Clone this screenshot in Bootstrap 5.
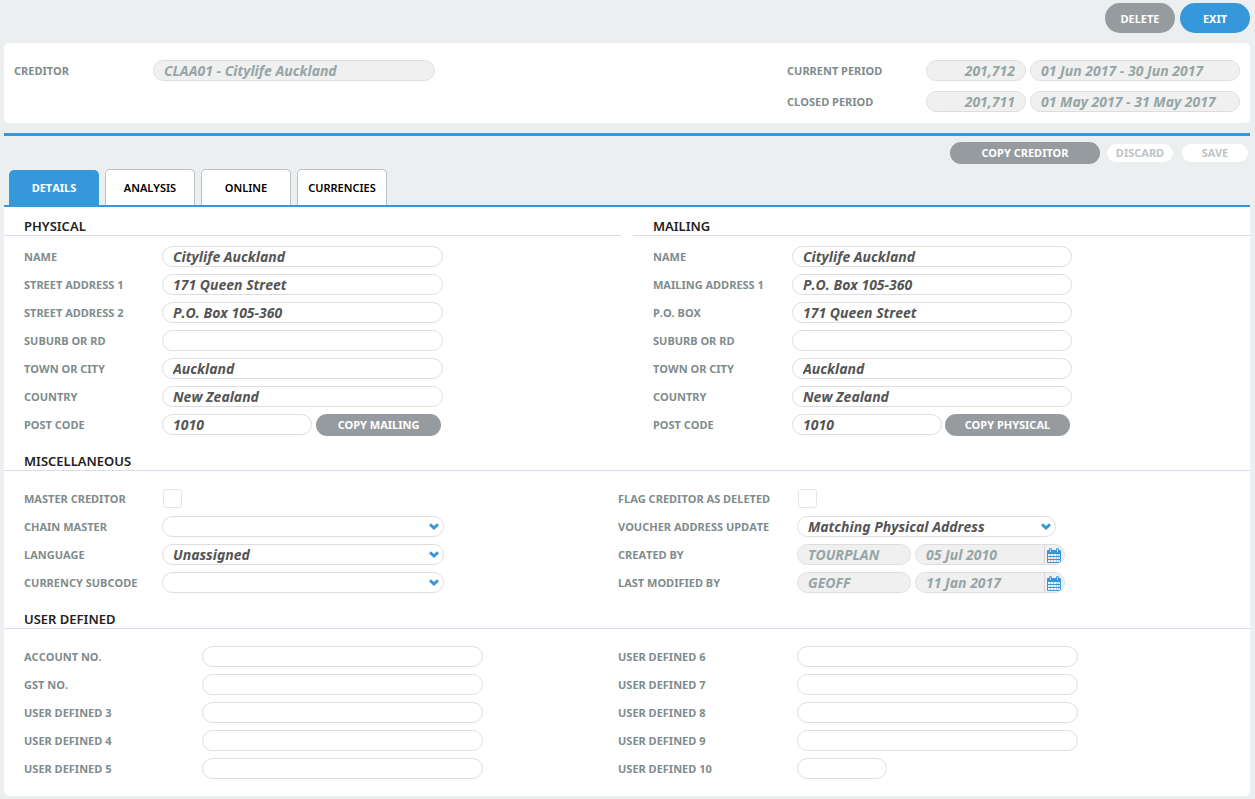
<!DOCTYPE html>
<html lang="en">
<head>
<meta charset="utf-8">
<meta name="viewport" content="width=device-width, initial-scale=1">
<title>Creditor details</title>
<link href="https://cdn.jsdelivr.net/npm/bootstrap@5.3.0/dist/css/bootstrap.min.css" rel="stylesheet">
<style>
  :root { --blue: #3498db; --grey: #969b9f; --label: #7f8c8d; --edge: #dddddd; }
  body { background: #ebeff0; font-family: "Noto Sans", "Open Sans", sans-serif; font-size: 11px; line-height: 16px; font-kerning: none; padding: 3px 5px 3px 4px; }

  /* buttons */
  .btn-pill { border: 0; border-radius: 16px; padding: 0; font-size: 11px; line-height: 16px; font-weight: 700; color: #fff; background: var(--grey); height: 22px; }
  .btn-pill.tall { width: 70px; height: 30px; padding-top: 2px; }
  .btn-pill.accent { background: var(--blue); }
  .btn-pill.wide { width: 150px; }
  .btn-pill.copy { width: 125px; }
  .btn-pill.pale, .btn-pill.pale:disabled { width: 66px; height: 18px; background: #fff; color: #bdc3c7; opacity: 1; }

  /* panels */
  .top-bar { gap: 5px; }
  .head-panel { background: #fff; border-radius: 5px; padding: 17px 10px 11px; margin-top: 10px; }
  .divider { height: 3px; background: var(--blue); margin-top: 10px; }
  .actions { gap: 7px; padding: 6px 2px 5px 0; }
  .edit-actions { gap: 9px; }
  .main-panel { background: #fff; border-radius: 0 0 5px 5px; padding-bottom: 17px; }

  /* tabs */
  .tabs { gap: 6px; padding-left: 5px; border-bottom: 2px solid var(--blue); }
  .tabs .nav-link { width: 90px; height: 36px; padding: 0; font-weight: 600; color: #000; background: #fff; border: 1px solid #bdc3c7; border-bottom: 0; border-radius: 5px 5px 0 0; }
  .tabs .nav-link.active { height: 35px; margin-top: 1px; padding-top: 1px; border: 0; color: #fff; background: var(--blue); font-weight: 700; }

  /* sections */
  .section-title { height: 29px; margin: 0; padding: 11px 20px 0; font-size: 13px; line-height: 17px; font-weight: 600; color: #222; border-bottom: 1px solid #dadae8; }
  .addresses { gap: 12px; }
  .address-fields { padding: 10px 0 7px 20px; }
  .two-col { display: grid; grid-template-columns: 1fr 1fr; padding: 17px 38px 0 20px; }
  .two-col.spaced { padding-bottom: 7px; }
  .field-list { display: flex; flex-direction: column; gap: 7px; }
  .field-list.roomy { gap: 10px; }
  .field { display: flex; align-items: flex-start; height: 21px; gap: 4px; }
  .field > label { flex: none; width: 134px; padding-top: 3px; font-weight: 700; color: var(--label); white-space: nowrap; }
  .wide-label .field > label { width: 174px; }
  .flag-label .field > label { width: 175px; }
  .head-panel .field > label { width: 135px; }

  /* inputs */
  .form-control.pill, .form-select.pill { width: 281px; height: 21px; min-height: 0; padding: 0 10px; border: 1px solid var(--edge); border-radius: 11px; background-color: #fff; font-size: 14px; line-height: 19px; font-style: italic; font-weight: 700; font-kerning: none; color: #555; }
  .form-select.pill { width: 282px; padding-right: 20px; background-image: url("data:image/svg+xml,%3Csvg xmlns='http://www.w3.org/2000/svg' viewBox='0 0 10 7'%3E%3Cpath d='M1 1.400 5 5 9 1.400' fill='none' stroke='%233498db' stroke-width='2.8'/%3E%3C/svg%3E"); background-repeat: no-repeat; background-position: right 4px top 6px; background-size: 10px 7px; }
  .form-control.pill:disabled { background-color: #f0f0f0; color: #95a5a6; opacity: 1; }
  .form-control.w-mid { width: 150px; }
  .form-control.w-last { width: 90px; }
  .form-control.w-code { width: 100px; text-align: right; }
  .form-control.w-range { width: 210px; }
  .form-control.w-user { width: 114px; }
  .form-control.w-creditor { width: 282px; }
  .form-select.w-voucher { width: 259px; }
  .mailing .field { gap: 3px; }
  .mailing .field > label { width: 136px; }
  .mailing .form-control.w-full { width: 280px; }
  .form-check-input.box { width: 19px; height: 19px; margin: 1px; border: 1px solid #e6e6e6; border-radius: 3px; }
  .date-box { display: flex; width: 150px; height: 21px; border: 1px solid var(--edge); border-radius: 11px; background: #f0f0f0; overflow: hidden; }
  .date-box .form-control.pill { flex: 1; width: auto; min-width: 0; height: 19px; border: 0; border-radius: 0; }
  .date-box button { flex: none; display: flex; width: 20px; padding: 3px 0 0 2px; border: 0; border-left: 1px solid #d5d5d5; background: #f0f0f0; }
</style>
</head>
<body>

<svg class="d-none" aria-hidden="true">
  <symbol id="calendar" viewBox="0 0 14 15">
    <path fill="#3498db" d="M0 3q0-1 1-1h12q1 0 1 1v11q0 1-1 1H1q-1 0-1-1z"/>
    <path fill="#f0f0f6" d="M1 6h12v2H1zM1 9h12v2H1zM1 12h12v2H1z"/>
    <path fill="#b4cdeb" d="M3 6h1v8H3zM6 6h1v8H6zM9 6h1v8H9zM11 6h1v8h-1z"/>
    <path fill="#3498db" d="M1 8h12v1H1zM1 11h12v1H1zM2 1q1.500-2 3 0v3H2zM9 1q1.500-2 3 0v3H9z"/>
    <path fill="#c5d8ef" d="M3 1h1v3H3zM10 1h1v3h-1z"/>
  </symbol>
</svg>

<header class="top-bar d-flex justify-content-end">
  <button type="button" class="btn btn-pill tall">DELETE</button>
  <button type="button" class="btn btn-pill tall accent">EXIT</button>
</header>

<section class="head-panel d-flex justify-content-between align-items-start">
  <div class="field">
    <label for="creditor">CREDITOR</label>
    <input id="creditor" class="form-control pill w-creditor" value="CLAA01 - Citylife Auckland" disabled>
  </div>
  <div class="field-list roomy">
    <div class="field">
      <label for="curPeriod">CURRENT PERIOD</label>
      <input id="curPeriod" class="form-control pill w-code" value="201,712" disabled>
      <input aria-label="Current period dates" class="form-control pill w-range" value="01 Jun 2017 - 30 Jun 2017" disabled>
    </div>
    <div class="field">
      <label for="closedPeriod">CLOSED PERIOD</label>
      <input id="closedPeriod" class="form-control pill w-code" value="201,711" disabled>
      <input aria-label="Closed period dates" class="form-control pill w-range" value="01 May 2017 - 31 May 2017" disabled>
    </div>
  </div>
</section>

<div class="divider"></div>

<div class="actions d-flex justify-content-end align-items-center">
  <button type="button" class="btn btn-pill wide">COPY CREDITOR</button>
  <div class="edit-actions d-flex">
    <button type="button" class="btn btn-pill pale" disabled>DISCARD</button>
    <button type="button" class="btn btn-pill pale" disabled>SAVE</button>
  </div>
</div>

<nav class="nav tabs">
  <a class="nav-link active d-flex align-items-center justify-content-center" aria-current="page" href="#details">DETAILS</a>
  <a class="nav-link d-flex align-items-center justify-content-center" href="#analysis">ANALYSIS</a>
  <a class="nav-link d-flex align-items-center justify-content-center" href="#online">ONLINE</a>
  <a class="nav-link d-flex align-items-center justify-content-center" href="#currencies">CURRENCIES</a>
</nav>

<main class="main-panel" id="details">
  <div class="addresses d-flex">
    <section class="flex-fill">
      <h2 class="section-title">PHYSICAL</h2>
      <div class="address-fields field-list">
        <div class="field"><label for="pName">NAME</label><input id="pName" class="form-control pill" value="Citylife Auckland"></div>
        <div class="field"><label for="pStreet1">STREET ADDRESS 1</label><input id="pStreet1" class="form-control pill" value="171 Queen Street"></div>
        <div class="field"><label for="pStreet2">STREET ADDRESS 2</label><input id="pStreet2" class="form-control pill" value="P.O. Box 105-360"></div>
        <div class="field"><label for="pSuburb">SUBURB OR RD</label><input id="pSuburb" class="form-control pill"></div>
        <div class="field"><label for="pTown">TOWN OR CITY</label><input id="pTown" class="form-control pill" value="Auckland"></div>
        <div class="field"><label for="pCountry">COUNTRY</label><input id="pCountry" class="form-control pill" value="New Zealand"></div>
        <div class="field"><label for="pPost">POST CODE</label><input id="pPost" class="form-control pill w-mid" value="1010"><button type="button" class="btn btn-pill copy">COPY MAILING</button></div>
      </div>
    </section>
    <section class="flex-fill mailing">
      <h2 class="section-title">MAILING</h2>
      <div class="address-fields field-list">
        <div class="field"><label for="mName">NAME</label><input id="mName" class="form-control pill w-full" value="Citylife Auckland"></div>
        <div class="field"><label for="mAddress1">MAILING ADDRESS 1</label><input id="mAddress1" class="form-control pill w-full" value="P.O. Box 105-360"></div>
        <div class="field"><label for="mPoBox">P.O. BOX</label><input id="mPoBox" class="form-control pill w-full" value="171 Queen Street"></div>
        <div class="field"><label for="mSuburb">SUBURB OR RD</label><input id="mSuburb" class="form-control pill w-full"></div>
        <div class="field"><label for="mTown">TOWN OR CITY</label><input id="mTown" class="form-control pill w-full" value="Auckland"></div>
        <div class="field"><label for="mCountry">COUNTRY</label><input id="mCountry" class="form-control pill w-full" value="New Zealand"></div>
        <div class="field"><label for="mPost">POST CODE</label><input id="mPost" class="form-control pill w-mid" value="1010"><button type="button" class="btn btn-pill copy">COPY PHYSICAL</button></div>
      </div>
    </section>
  </div>

  <section>
    <h2 class="section-title">MISCELLANEOUS</h2>
    <div class="two-col spaced">
      <div class="field-list">
        <div class="field"><label for="master">MASTER CREDITOR</label><input type="checkbox" id="master" class="form-check-input box"></div>
        <div class="field"><label for="chain">CHAIN MASTER</label><select id="chain" class="form-select pill"><option></option></select></div>
        <div class="field"><label for="language">LANGUAGE</label><select id="language" class="form-select pill"><option>Unassigned</option></select></div>
        <div class="field"><label for="subcode">CURRENCY SUBCODE</label><select id="subcode" class="form-select pill"><option></option></select></div>
      </div>
      <div class="field-list flag-label">
        <div class="field"><label for="flag">FLAG CREDITOR AS DELETED</label><input type="checkbox" id="flag" class="form-check-input box"></div>
        <div class="field"><label for="voucher">VOUCHER ADDRESS UPDATE</label><select id="voucher" class="form-select pill w-voucher"><option>Matching Physical Address</option></select></div>
        <div class="field">
          <label for="createdBy">CREATED BY</label>
          <input id="createdBy" class="form-control pill w-user" value="TOURPLAN" disabled>
          <div class="date-box">
            <input aria-label="Created date" class="form-control pill" value="05 Jul 2010" disabled>
            <button type="button" aria-label="Pick created date"><svg width="14" height="15"><use href="#calendar"/></svg></button>
          </div>
        </div>
        <div class="field">
          <label for="modifiedBy">LAST MODIFIED BY</label>
          <input id="modifiedBy" class="form-control pill w-user" value="GEOFF" disabled>
          <div class="date-box">
            <input aria-label="Modified date" class="form-control pill" value="11 Jan 2017" disabled>
            <button type="button" aria-label="Pick modified date"><svg width="14" height="15"><use href="#calendar"/></svg></button>
          </div>
        </div>
      </div>
    </div>
  </section>

  <section>
    <h2 class="section-title">USER DEFINED</h2>
    <div class="two-col">
      <div class="field-list wide-label">
        <div class="field"><label for="u1">ACCOUNT NO.</label><input id="u1" class="form-control pill"></div>
        <div class="field"><label for="u2">GST NO.</label><input id="u2" class="form-control pill"></div>
        <div class="field"><label for="u3">USER DEFINED 3</label><input id="u3" class="form-control pill"></div>
        <div class="field"><label for="u4">USER DEFINED 4</label><input id="u4" class="form-control pill"></div>
        <div class="field"><label for="u5">USER DEFINED 5</label><input id="u5" class="form-control pill"></div>
      </div>
      <div class="field-list flag-label">
        <div class="field"><label for="u6">USER DEFINED 6</label><input id="u6" class="form-control pill"></div>
        <div class="field"><label for="u7">USER DEFINED 7</label><input id="u7" class="form-control pill"></div>
        <div class="field"><label for="u8">USER DEFINED 8</label><input id="u8" class="form-control pill"></div>
        <div class="field"><label for="u9">USER DEFINED 9</label><input id="u9" class="form-control pill"></div>
        <div class="field"><label for="u10">USER DEFINED 10</label><input id="u10" class="form-control pill w-last"></div>
      </div>
    </div>
  </section>
</main>

<script src="https://cdn.jsdelivr.net/npm/bootstrap@5.3.0/dist/js/bootstrap.bundle.min.js"></script>
</body>
</html>
